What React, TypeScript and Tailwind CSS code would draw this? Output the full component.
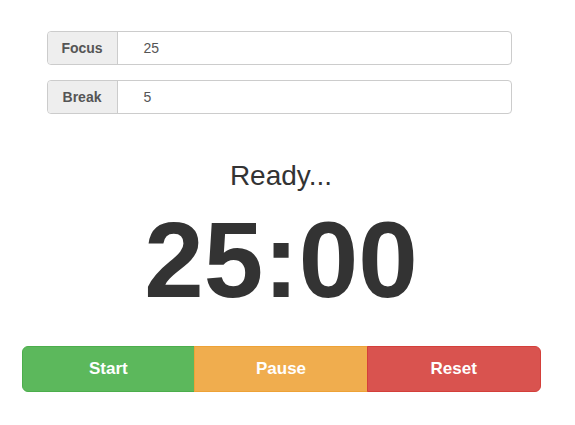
export default function App() {
  const fields = [
    { label: "Focus", value: "25" },
    { label: "Break", value: "5" },
  ];

  return (
    <div
      className="min-h-[425px] bg-white text-[#333]"
      style={{ fontFamily: '"Liberation Sans", Arial, sans-serif' }}
    >
      <div className="w-[562px] pt-[31px] flex flex-col items-center">
        {/* Settings */}
        <div className="w-[465px] mr-[4px] flex flex-col gap-[15px]">
          {fields.map((f) => (
            <div key={f.label} className="flex h-[34px] rounded-[4px] border border-[#ccc]">
              <div className="w-[70px] flex items-center justify-center bg-[#eee] border-r border-[#ccc] rounded-l-[4px] text-[14px] font-bold text-[#555]">
                {f.label}
              </div>
              <div className="flex-1 flex items-center pl-[26px] text-[14px] text-[#555]">
                {f.value}
              </div>
            </div>
          ))}
        </div>

        {/* Status */}
        <div className="mt-[46px] text-[28px] leading-[31px] text-[#333]">Ready...</div>
        <div className="mt-[16px] text-[107px] leading-[107px] font-bold text-[#333]">25:00</div>

        {/* Controls */}
        <div className="mt-[32px] w-[519px] flex h-[46px]">
          <button className="flex-1 bg-[#5cb85c] border border-[#4cae4c] rounded-l-[6px] text-white text-[17px] font-bold">
            Start
          </button>
          <button className="flex-1 bg-[#f0ad4e] border border-[#eea236] -ml-px text-white text-[17px] font-bold">
            Pause
          </button>
          <button className="flex-1 bg-[#d9534f] border border-[#d43f3a] -ml-px rounded-r-[6px] text-white text-[17px] font-bold">
            Reset
          </button>
        </div>
      </div>
    </div>
  );
}
